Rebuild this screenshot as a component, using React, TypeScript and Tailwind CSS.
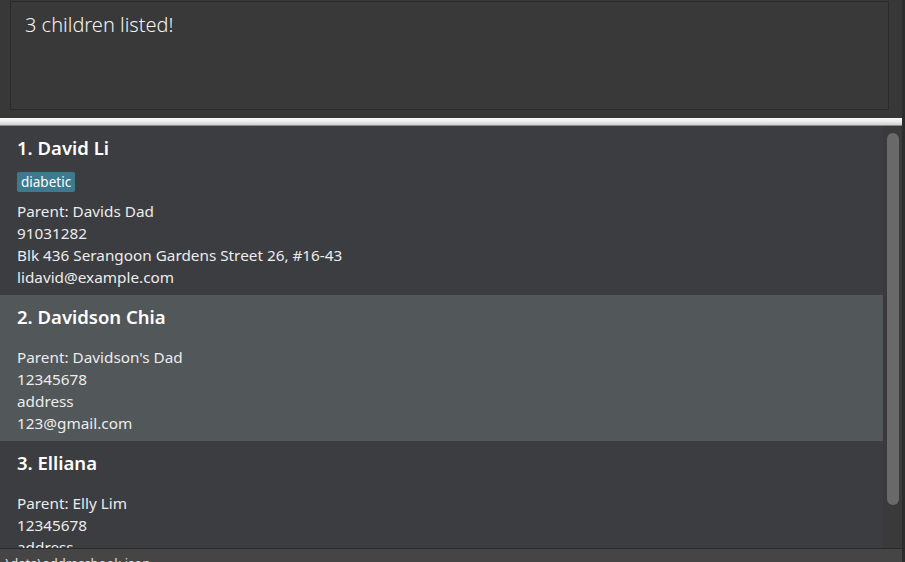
import React from 'react';

type Child = {
  name: string;
  tags: string[];
  parent: string;
  phone: string;
  address: string;
  email: string;
  selected?: boolean;
};

const CHILDREN: Child[] = [
  {
    name: 'David Li',
    tags: ['diabetic'],
    parent: 'Davids Dad',
    phone: '91031282',
    address: 'Blk 436 Serangoon Gardens Street 26, #16-43',
    email: 'lidavid@example.com',
  },
  {
    name: 'Davidson Chia',
    tags: [],
    parent: "Davidson's Dad",
    phone: '12345678',
    address: 'address',
    email: '123@gmail.com',
    selected: true,
  },
  {
    name: 'Elliana',
    tags: [],
    parent: 'Elly Lim',
    phone: '12345678',
    address: 'address',
    email: 'elly@example.com',
  },
];

function ChildCard({ child, index }: { child: Child; index: number }) {
  const hasTags = child.tags.length > 0;
  return (
    <div className={`pl-[17px] pt-[9px] pb-[7px] ${child.selected ? 'bg-[#525759]' : 'bg-[#3c3d40]'}`}>
      <div className="text-[18.5px] leading-[26px] font-semibold text-white">
        {index + 1}. {child.name}
      </div>
      <div className={hasTags ? 'flex gap-1 h-[20px] mt-[11px] mb-[8px]' : 'h-[16px]'}>
        {child.tags.map((t) => (
          <span key={t} className="bg-[#3d7a8f] text-white text-[13.5px] leading-[20px] px-[4px] rounded-[2px]">
            {t}
          </span>
        ))}
      </div>
      <div className="text-[15.3px] leading-[22px] text-[#ececec]">
        <div>Parent: {child.parent}</div>
        <div>{child.phone}</div>
        <div>{child.address}</div>
        <div>{child.email}</div>
      </div>
    </div>
  );
}

export default function App() {
  return (
    <div
      className="w-[905px] h-[562px] overflow-hidden flex bg-[#383838]"
      style={{ fontFamily: '"Noto Sans", "Open Sans", sans-serif' }}
    >
      <div className="flex-1 flex flex-col min-w-0">
        {/* result display */}
        <div className="h-[118px] shrink-0 pl-[10px] pr-[13px] pt-[1px] pb-[8px]">
          <div className="h-full border border-[#2b2b2b] bg-[#393939] pl-[14px] pt-[8px]">
            <div className="text-[20px] leading-[30px] font-light text-[#f2f2f2]">3 children listed!</div>
          </div>
        </div>

        {/* split divider */}
        <div className="h-[8px] shrink-0 border-b border-[#8a8a8a] bg-gradient-to-b from-[#fbfbfb] via-[#ececec] to-[#cfcfcf]" />

        {/* list */}
        <div className="flex-1 min-h-0 flex bg-[#3c3d40]">
          <div className="flex-1 min-w-0 overflow-hidden">
            {CHILDREN.map((c, i) => (
              <ChildCard key={c.name} child={c} index={i} />
            ))}
          </div>
          <div className="w-[19px] shrink-0 bg-[#3a3a3b] pt-[7px] pl-[4px]">
            <div className="w-[12px] h-[372px] rounded-[6px] bg-[#696969]" />
          </div>
        </div>

        {/* status bar */}
        <div className="h-[14px] shrink-0 border-t border-[#2a2a2a] bg-[#454545] overflow-hidden">
          <div className="pl-[2px] text-[13px] leading-[13px] mt-[8px] text-[#e0e0e0]">.\data\addressbook.json</div>
        </div>
      </div>
      <div className="w-[3px] shrink-0 bg-[#2d2d2d]" />
    </div>
  );
}
